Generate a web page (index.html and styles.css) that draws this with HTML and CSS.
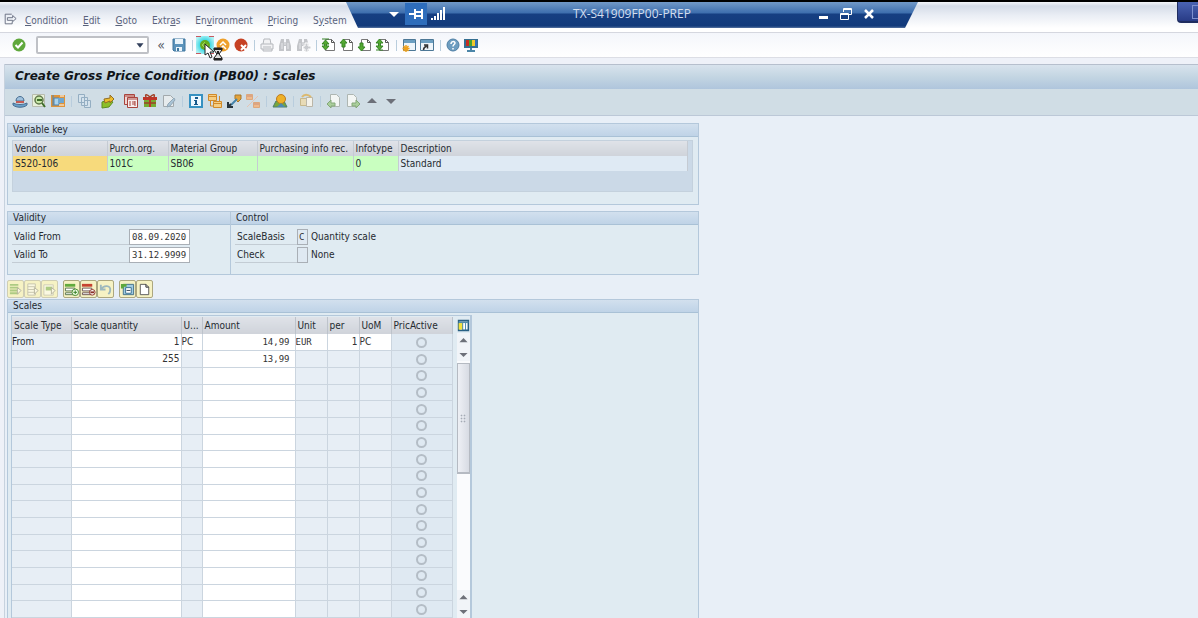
FILE: index.html
```html
<!DOCTYPE html>
<html lang="en">
  <head>
    <meta charset="UTF-8" />
    <meta name="viewport" content="width=device-width, initial-scale=1.0" />
    <title>Create Gross Price Condition (PB00) : Scales</title>
    <link rel="stylesheet" href="styles.css">
  </head>
  <body>
    <!-- shared icons -->
    <svg class="sprite" aria-hidden="true">
      <symbol id="page" viewBox="0 0 16 16"><path d="M4.500 2.500h6l3 3v8h-9z" fill="#fff" stroke="#777"/><path d="M10.500 2.500v3h3" fill="none" stroke="#555"/></symbol>
      <symbol id="binoculars" viewBox="0 0 16 16"><path d="M4 2h3v3h2V2h3l2 7v5H9v-5H7v5H2V9z" fill="#c3c5c9"/><path d="M5 6v6M11 6v6M8 5v3" stroke="#e6e7ea"/></symbol>
      <symbol id="up" viewBox="0 0 16 16"><path d="M8 5l5 5H3z" fill="#6d7079"/></symbol>
      <symbol id="down" viewBox="0 0 16 16"><path d="M3 6h10l-5 5z" fill="#6d7079"/></symbol>
    </svg>

    <header class="menubar">
      <svg class="menu-icon" viewBox="0 0 16 16"><path d="M10 2.500H2.500v11h8V11M5 6.500h6V4l4 3.500-4 3.500V9.500H5z" fill="none" stroke="#5f6679"/></svg>
      <nav class="menu">
        <a href="#"><u>C</u>ondition</a>
        <a href="#"><u>E</u>dit</a>
        <a href="#"><u>G</u>oto</a>
        <a href="#">Extr<u>a</u>s</a>
        <a href="#">En<u>v</u>ironment</a>
        <a href="#"><u>P</u>ricing</a>
        <a href="#">S<u>y</u>stem</a>
      </nav>
    </header>

    <!-- remote session bar floats over the menu -->
    <div class="session-bar">
      <div class="session-left">
        <button aria-label="Session menu"><svg viewBox="0 0 16 16"><path d="M3 6h10l-5 5z" fill="#fff"/></svg></button>
        <button class="pinned" aria-label="Pin"><svg viewBox="0 0 16 16"><path d="M1 7h5V3h2v2h5V3h2v10h-2v-2H8v2H6V9H1zM8 7v2h5V7z" fill="#fff"/></svg></button>
        <button aria-label="Connection quality"><svg viewBox="0 0 16 16"><path d="M1 12h2v2H1zM4 10h2v4H4zM7 7h2v7H7zM10 4h2v10h-2zM13 1h2v13h-2z" fill="#fff"/></svg></button>
      </div>
      <span class="session-name">TX-S41909FP00-PREP</span>
      <div class="session-right">
        <button aria-label="Minimize"><svg viewBox="0 0 16 16"><path d="M4 10h9v3H4z" fill="#fff"/></svg></button>
        <button aria-label="Restore"><svg viewBox="0 0 16 16"><path d="M5.500 6V2.500h8v6H11M5 3.500h9M2.500 7.500h8v6h-8zM2 8.500h9" fill="none" stroke="#fff"/></svg></button>
        <button aria-label="Close"><svg viewBox="0 0 16 16"><path d="M4 4l8 8M12 4l-8 8" stroke="#fff" stroke-width="2.500"/></svg></button>
      </div>
    </div>
    <div class="corner-bar"></div>

    <div class="toolbar">
      <button aria-label="Enter"><svg viewBox="0 0 16 16"><circle cx="8" cy="8" r="6.500" fill="#5fa83c"/><path d="M4.500 8l2.500 2.500 4.500-5" fill="none" stroke="#fff" stroke-width="2"/></svg></button>
      <div class="command">
        <input type="text" aria-label="Command field">
        <svg viewBox="0 0 16 16"><path d="M4 6h8l-4 5z" fill="#33415c"/></svg>
      </div>
      <button class="collapse" aria-label="Collapse">«</button>
      <button aria-label="Save"><svg viewBox="0 0 16 16"><path d="M2 2h12v12H3l-1-1z" fill="#5c93bb" stroke="#3e779f"/><path d="M4 2h8v5H4zM5 10h6v4H5z" fill="#eaf4fb"/><path d="M6 11h2v3H6z" fill="#3e779f"/></svg></button>
      <i class="sep"></i>
      <button class="busy" aria-label="Back">
        <svg viewBox="0 0 16 16"><circle cx="8" cy="8" r="5" fill="#66ad1e"/><path d="M5 8h6M8 5L5 8l3 3" fill="none" stroke="#9fd05c"/></svg>
        <svg class="pointer" viewBox="0 0 20 18"><path d="M1 1v11l3-2 2 5 2-1-2-5h4z" fill="#fff" stroke="#222"/><path d="M10 5h8v2l-3 4 3 4v2h-8v-2l3-4-3-4z" fill="#ddd" stroke="#111"/><path d="M10 5h8v2h-8zM10 15h8v2h-8zM13 8h2v3h-2z" fill="#222"/></svg>
      </button>
      <button aria-label="Exit"><svg viewBox="0 0 16 16"><circle cx="8" cy="8" r="6.500" fill="#eea02b"/><path d="M5 8l3-3 3 3M5 12l3-3 3 3" fill="none" stroke="#fff" stroke-width="1.500"/></svg></button>
      <button aria-label="Cancel"><svg viewBox="0 0 16 16"><circle cx="8" cy="8" r="6.500" fill="#c64124"/><path d="M8 8l5 5M13 8l-5 5" stroke="#fff" stroke-width="2"/></svg></button>
      <i class="sep"></i>
      <button aria-label="Print"><svg viewBox="0 0 16 16"><path d="M4 7l1-5h6l1 5M2 7h12v5H2zM4 12v2h9v-2" fill="#f2f2f4" stroke="#b5b8bd"/><path d="M4 10h8" stroke="#b5b8bd"/></svg></button>
      <button aria-label="Find"><svg><use href="#binoculars"/></svg></button>
      <button aria-label="Find next"><svg viewBox="0 0 16 16"><use href="#binoculars"/><path d="M10 6h3v3h3v3h-3v3h-3v-3H8V9h2z" fill="#c9cbcf" stroke="#fff"/></svg></button>
      <i class="sep"></i>
      <button aria-label="First page"><svg viewBox="0 0 16 16"><use href="#page"/><path d="M1 2h7M4.500 3L1 7h2.500v2H1l3.500 4L8 9H5.500V7H8z" fill="#54a832" stroke="#378526"/></svg></button>
      <button aria-label="Previous page"><svg viewBox="0 0 16 16"><use href="#page"/><path d="M4.500 2L1 6h2v4h3V6h2z" fill="#54a832" stroke="#378526"/></svg></button>
      <button aria-label="Next page"><svg viewBox="0 0 16 16"><use href="#page"/><path d="M4.500 14L1 10h2V6h3v4h2z" fill="#54a832" stroke="#378526"/></svg></button>
      <button aria-label="Last page"><svg viewBox="0 0 16 16"><use href="#page"/><path d="M4.500 2L1 6h2.500v3H1l3.500 4L8 9H5.500V6H8zM1 13h7" fill="#54a832" stroke="#378526"/></svg></button>
      <i class="sep"></i>
      <button aria-label="New session"><svg viewBox="0 0 16 16"><path d="M2.500 2.500h12v11h-12z" fill="#eef5fa" stroke="#4d7896"/><path d="M3 3h11v3H3z" fill="#6c9fc1"/><path d="M5 8v7M1.500 11.500h7M2.500 9l5 5M7.500 9l-5 5" stroke="#f0a21d" stroke-width="1.500"/></svg></button>
      <button aria-label="Create shortcut"><svg viewBox="0 0 16 16"><path d="M1.500 2.500h13v11h-13z" fill="#eef5fa" stroke="#4d7896"/><path d="M2 3h12v3H2z" fill="#6c9fc1"/><path d="M4.500 13c0-2 1-3 3-4M5 8h3.500v3.500" fill="none" stroke="#333" stroke-width="1.500"/></svg></button>
      <i class="sep"></i>
      <button aria-label="Help"><svg viewBox="0 0 16 16"><circle cx="8" cy="8" r="6" fill="#6d9dc0" stroke="#4e7fa5"/><path d="M6 7c0-3 4-3 4-1 0 1.500-2 1.500-2 3.500M8 11v1.500" fill="none" stroke="#fff" stroke-width="1.500"/></svg></button>
      <button aria-label="Customize layout"><svg viewBox="0 0 16 16"><path d="M1 2h14v9H1z" fill="#356f91"/><path d="M3 3h3v6H3z" fill="#c52e23"/><path d="M6 3h3v6H6z" fill="#46a232"/><path d="M9 3h3v6H9z" fill="#f2c72b"/><path d="M12 3h2v6h-2z" fill="#3471b9"/><path d="M7 11h2v2h3v2H4v-2h3z" fill="#4c86a8"/></svg></button>
    </div>

    <main class="screen">
      <h1>Create Gross Price Condition (PB00) : Scales</h1>

      <div class="app-toolbar">
        <button aria-label="Overview"><svg viewBox="0 0 16 16"><path d="M4 8c0-6 8-6 8 0z" fill="#9fc1dd" stroke="#476d91"/><path d="M1 10c3 2 11 2 14 0v2c-3 3-11 3-14 0z" fill="#68a0ca" stroke="#476d91"/><path d="M4 8h8v2H4z" fill="#c45a53"/></svg></button>
        <button aria-label="Details"><svg viewBox="0 0 16 16"><path d="M1.500 1.500h12v12h-12z" fill="#e8f1da" stroke="#b8bcae"/><circle cx="8" cy="7" r="4" fill="#c7e8a8" stroke="#61774b" stroke-width="1.500"/><path d="M6 7h5M11 10l3 4" stroke="#3f6e2b" stroke-width="2"/></svg></button>
        <button aria-label="Period"><svg viewBox="0 0 16 16"><path d="M1 2h14v12H1z" fill="#df943b"/><path d="M3 2v11M4 5h5v7H4z" fill="#acd3eb" stroke="#4b84b5"/><path d="M8 5h6v5H8z" fill="#6fa7d0"/><path d="M10 3h4M9 12h5" stroke="#fff"/></svg></button>
        <i class="sep"></i>
        <button aria-label="Copy"><svg viewBox="0 0 16 16"><path d="M1.500 1.500h6v8h-6zM4.500 4.500h6v8h-6zM7.500 7.500h6v7h-6z" fill="#d4e2ec" stroke="#94aec2"/></svg></button>
        <button class="wide" aria-label="Change"><svg viewBox="0 0 16 16"><path d="M2 9l6-2 5 2-4 5-7 1z" fill="#8cbf28" stroke="#5c8d21"/><path d="M4 6l6-1V2l4 4-4 4V8L5 10z" fill="#edbd2c" stroke="#936e25"/></svg></button>
        <button aria-label="Selected records"><svg viewBox="0 0 16 16"><path d="M1.500 1.500h10v10h-10z" fill="#f0d5d1" stroke="#a9443d"/><path d="M4.500 4.500h10v10h-10z" fill="#f7eeee" stroke="#a9443d"/><path d="M2 3h9M5 6h9M7 8v5M9 9h3M9 11h3M12 8v5" stroke="#a9443d"/></svg></button>
        <button aria-label="Free goods"><svg viewBox="0 0 16 16"><path d="M2 6h12v8H2z" fill="#78ab33"/><path d="M1 4h14v3H1zM7 4h2v10H7z" fill="#bf3428"/><path d="M8 4C4 0 3 2 4 4M8 4c4-4 5-2 4 0M2 10h12" fill="none" stroke="#9f4127" stroke-width="1.500"/></svg></button>
        <button aria-label="Texts"><svg viewBox="0 0 16 16"><path d="M2.500 2.500h7l3 3v8h-10z" fill="#e6ebed" stroke="#a2a9ac"/><path d="M13 5l-6 6-1 3 3-1 5-6z" fill="#a9c4d6" stroke="#92a7b6"/></svg></button>
        <i class="sep"></i>
        <button aria-label="Information"><svg viewBox="0 0 16 16"><path d="M2 2h12v12H2z" fill="#edf8ff" stroke="#3791c1" stroke-width="2"/><path d="M7 4h3v2H7zM6 7h3v4h1v1H6v-1h1V8H6z" fill="#17598b"/></svg></button>
        <button aria-label="Condition records"><svg viewBox="0 0 16 16"><path d="M1.500 1.500h8v6h-8zM6.500 8.500h8v6h-8z" fill="#f5ce83" stroke="#d18a2a"/><path d="M2 3.500h7M7 10.500h7M12.500 3v5M3.500 8v5H6" fill="none" stroke="#d18a2a"/></svg></button>
        <button aria-label="Limits"><svg viewBox="0 0 16 16"><path d="M9 2h6v4l-3 3-3-3z" fill="#e2a33b" stroke="#a9772b"/><path d="M11 6l-6 6" stroke="#4584aa" stroke-width="2"/><path d="M2 9v5h5M2 14l3-3" fill="none" stroke="#27343d" stroke-width="2"/></svg></button>
        <button aria-label="Exclusions"><svg viewBox="0 0 16 16"><path d="M1.500 1.500h6v5h-6zM8.500 9.500h6v5h-6z" fill="#efba8c" stroke="#dca77d"/><path d="M2 14L13 3" stroke="#e4c4b4"/><path d="M9 11h5M2 3h5" stroke="#c98f7c"/></svg></button>
        <i class="sep"></i>
        <button aria-label="Partner"><svg viewBox="0 0 16 16"><path d="M1 14l3-6h8l3 6z" fill="#78a63b" stroke="#4a7d6d"/><circle cx="9" cy="6" r="4.500" fill="#eeb127" stroke="#bd7a20"/><path d="M5 14l4-4 4 4z" fill="#4c89b2"/></svg></button>
        <i class="sep"></i>
        <button aria-label="Paste"><svg viewBox="0 0 16 16"><path d="M1.500 5.500h8v7h-8z" fill="#e8dbb6" stroke="#c7b88c"/><path d="M7.500 4.500h6v9h-6z" fill="#f4f2ea" stroke="#bbb6a8"/><path d="M3 4c2-3 6-3 9 0" fill="none" stroke="#dcb96f" stroke-width="2"/></svg></button>
        <i class="sep"></i>
        <button aria-label="Previous record"><svg viewBox="0 0 16 16"><path d="M4.500 1.500h6l3 3v9h-9z" fill="#f3f6f4" stroke="#aeb6b2"/><path d="M1 11l4-4v3h4v3H5v2z" fill="#a9ce9b" stroke="#84a778"/></svg></button>
        <button aria-label="Next record"><svg viewBox="0 0 16 16"><path d="M2.500 1.500h6l3 3v9h-9z" fill="#f3f6f4" stroke="#aeb6b2"/><path d="M15 11l-4-4v3H7v3h4v2z" fill="#a9ce9b" stroke="#84a778"/></svg></button>
        <button aria-label="Up"><svg><use href="#up"/></svg></button>
        <button aria-label="Down"><svg><use href="#down"/></svg></button>
      </div>

      <div class="content">
        <section class="panel key-panel">
          <h2>Variable key</h2>
          <div class="key-box">
            <table class="key-table">
              <thead>
                <tr>
                  <th class="w-vendor">Vendor</th>
                  <th class="w-org">Purch.org.</th>
                  <th class="w-group">Material Group</th>
                  <th class="w-info">Purchasing info rec.</th>
                  <th class="w-type">Infotype</th>
                  <th>Description</th>
                </tr>
              </thead>
              <tbody>
                <tr>
                  <td class="selected">S520-106</td>
                  <td class="key">101C</td>
                  <td class="key">SB06</td>
                  <td class="key"></td>
                  <td class="key">0</td>
                  <td>Standard</td>
                </tr>
              </tbody>
            </table>
          </div>
        </section>

        <div class="panel-row">
          <section class="panel validity">
            <h2>Validity</h2>
            <div class="field">
              <label for="validFrom">Valid From</label>
              <input id="validFrom" type="text" value="08.09.2020">
            </div>
            <div class="field">
              <label for="validTo">Valid To</label>
              <input id="validTo" type="text" value="31.12.9999">
            </div>
          </section>
          <section class="panel control">
            <h2>Control</h2>
            <div class="field">
              <label for="scaleBasis">ScaleBasis</label>
              <input id="scaleBasis" type="text" value="C" readonly>
              <span>Quantity scale</span>
            </div>
            <div class="field">
              <label for="check">Check</label>
              <input id="check" type="text" value="" readonly>
              <span>None</span>
            </div>
          </section>
        </div>

        <div class="scale-tools">
          <div class="tool-group faded">
            <button aria-label="Select all"><svg viewBox="0 0 16 16"><path d="M2 3h9M2 6h9M2 9h9M2 12h9" stroke="#67a544" stroke-width="2"/><path d="M10 6l4 3-4 4z" fill="#fff" stroke="#777"/></svg></button>
            <button aria-label="Select block"><svg viewBox="0 0 16 16"><path d="M3 2h8v12H3zM3 5h8M3 8h8M3 11h8" fill="#fff" stroke="#999"/><path d="M10 6l4 3-4 4z" fill="#fff" stroke="#777"/></svg></button>
            <button aria-label="Deselect all"><svg viewBox="0 0 16 16"><path d="M2 3h10v11H2z" fill="#fff" stroke="#aaa"/><path d="M4 5h7v4H4z" fill="#67a544"/><path d="M10 6l4 3-4 4z" fill="#fff" stroke="#777"/></svg></button>
          </div>
          <div class="tool-group">
            <button aria-label="Insert row"><svg viewBox="0 0 16 16"><path d="M1 2h11v3H1z" fill="#62aa3d"/><path d="M1.500 6.500h10v3h-10zM1.500 11.500h10v2h-10z" fill="#fff" stroke="#55724a"/><circle cx="12" cy="11" r="3.500" fill="#f1ffe7" stroke="#468a2f"/><path d="M12 9v4M10 11h4" stroke="#317a21"/></svg></button>
            <button aria-label="Delete row"><svg viewBox="0 0 16 16"><path d="M1 2h11v3H1z" fill="#c64330"/><path d="M1.500 6.500h10v3h-10zM1.500 11.500h10v2h-10z" fill="#fff" stroke="#6a5250"/><circle cx="12" cy="11" r="3" fill="#fff" stroke="#8b3027"/><path d="M10 11h4" stroke="#8b3027" stroke-width="2"/></svg></button>
            <button aria-label="Undo"><svg viewBox="0 0 16 16"><path d="M3 3v5h5M3 8c3-5 11-5 10 1 0 2-1 3-2 4" fill="none" stroke="#9db8bd" stroke-width="2"/></svg></button>
          </div>
          <div class="tool-group">
            <button aria-label="Display scales"><svg viewBox="0 0 16 16"><path d="M3.500 2.500h11v11h-11z" fill="#9fcae2" stroke="#416f87"/><path d="M6 6h6v6H6z" fill="#fff" stroke="#36718f"/><path d="M7 9h4" stroke="#345"/><path d="M1 2h6v3H4v2H1z" fill="#5ea83c"/></svg></button>
            <button aria-label="New scale"><svg viewBox="0 0 16 16"><path d="M3.500 2.500h6l3 3v8h-9z" fill="#fff" stroke="#555"/><path d="M9.500 2.500v3h3" fill="none" stroke="#222"/></svg></button>
          </div>
        </div>

        <section class="panel scales">
          <h2>Scales</h2>
          <div class="scale-box">
            <table class="scale-table">
              <thead>
                <tr>
                  <th class="c-type">Scale Type</th>
                  <th class="c-qty">Scale quantity</th>
                  <th class="c-unit">U...</th>
                  <th class="c-amount">Amount</th>
                  <th class="c-small">Unit</th>
                  <th class="c-small">per</th>
                  <th class="c-small">UoM</th>
                  <th class="c-active">PricActive</th>
                </tr>
              </thead>
              <tbody id="scaleRows"></tbody>
            </table>
            <div class="scroll">
              <button aria-label="Configure columns"><svg viewBox="0 0 16 16"><path d="M2 2h12v12H2z" fill="#fff" stroke="#285f82" stroke-width="2"/><path d="M2 5h5v8H2z" fill="#f4e23d"/><path d="M2 3h12v2H2z" fill="#548da8"/><path d="M7 5v9M10.500 5v9" stroke="#26729c"/></svg></button>
              <button aria-label="Scroll up"><svg><use href="#up"/></svg></button>
              <button aria-label="Scroll down"><svg><use href="#down"/></svg></button>
              <div class="track"><div class="thumb"></div></div>
              <button aria-label="Page up"><svg><use href="#up"/></svg></button>
              <button aria-label="Page down"><svg><use href="#down"/></svg></button>
            </div>
          </div>
        </section>
      </div>
    </main>
    <script src="script.js"></script>
  </body>
</html>
```
FILE: styles.css
```css
* {
  margin: 0;
  padding: 0;
  box-sizing: border-box;
}

body {
  display: flex;
  flex-direction: column;
  height: 100vh;
  overflow: hidden;
  border-top: 2px solid #000;
  background: #eef1f8;
  color: #252a30;
  font-family: "DejaVu Sans Condensed", "DejaVu Sans", sans-serif;
  font-size: 10px;
  line-height: 14px;
}

button {
  display: flex;
  align-items: center;
  justify-content: center;
  border: none;
  background: none;
  color: inherit;
  font: inherit;
}

button svg {
  flex: none;
  width: 16px;
  height: 16px;
}

.sprite {
  position: absolute;
  width: 0;
  height: 0;
}

.menubar {
  display: flex;
  align-items: center;
  flex: none;
  height: 30px;
  padding: 7px 0 0 3px;
  background: linear-gradient(#f5f7fb 0, #d5dce8 4px, #e9edf4 13px, #fff 26px);
}

.menu-icon {
  width: 14px;
  height: 14px;
  margin: 0 8px 4px 0;
}

.menu {
  display: flex;
  gap: 15px;
}

.menu a {
  color: #59627b;
  text-decoration: none;
}

/* remote session */
.session-bar {
  position: absolute;
  top: 2px;
  left: 346px;
  display: flex;
  align-items: center;
  justify-content: space-between;
  width: 572px;
  height: 26px;
  padding: 0 41px 2px 37px;
  background: linear-gradient(#7199c8, #3d6ead 11px, #163f82 12px, #123a7b 24px, #5875a1);
  clip-path: polygon(0 0, 100% 0, 559px 100%, 12px 100%);
  color: #d3deef;
}

.session-left,
.session-right {
  display: flex;
}

.session-left button {
  width: 22px;
  height: 22px;
}

.session-left .pinned {
  background: #2e6dbb;
}

.session-right {
  gap: 7px;
}

.session-name {
  font: 12px/16px "Open Sans", sans-serif;
}

.corner-bar {
  position: absolute;
  top: 2px;
  right: 0;
  width: 21px;
  height: 21px;
  border: 1px solid #1f2d60;
  border-width: 0 0 2px 1px;
  border-radius: 0 0 0 4px;
  background: linear-gradient(#4a63b3, #283b86);
}

.corner-bar::after {
  content: "";
  display: block;
  height: 12px;
  margin: 3px 0 0 14px;
  border: 1px solid #7c8fce;
  border-right: none;
}

/* system toolbar */
.toolbar {
  display: flex;
  align-items: center;
  flex: none;
  height: 26px;
  padding-left: 10px;
  border-top: 1px solid #d5d7df;
  border-bottom: 1px solid #dcdee5;
  background: linear-gradient(#f4f6fb, #fff);
}

.toolbar button {
  flex: none;
  width: 18px;
  height: 18px;
}

.command {
  display: flex;
  align-items: center;
  width: 113px;
  height: 18px;
  margin: 0 3px 0 8px;
  border: 2px solid #bfc1c6;
  border-radius: 2px;
  background: #fff;
}

.command input {
  flex: 1;
  min-width: 0;
  border: none;
  background: none;
}

.command svg {
  width: 14px;
  height: 14px;
}

.toolbar .collapse {
  font-size: 14px;
  color: #555b68;
}

.sep {
  flex: none;
  width: 8px;
  height: 11px;
  background: linear-gradient(#b9cddd, #b9cddd) center / 1px 100% no-repeat;
}

.busy {
  position: relative;
  background:
    linear-gradient(90deg, #c75961 5px, transparent 5px 13px, #c75961 13px) top / 100% 1px no-repeat,
    linear-gradient(90deg, #c75961 5px, transparent 5px 13px, #c75961 13px) bottom / 100% 1px no-repeat,
    radial-gradient(#42d9e5 40%, #b1f2f4 80%);
}

.busy .pointer {
  position: absolute;
  top: 7px;
  left: 8px;
  z-index: 1;
  width: 20px;
  height: 18px;
}

/* screen */
.screen {
  display: flex;
  flex: 1;
  flex-direction: column;
  min-height: 0;
  margin: 6px 0 0 4px;
  border-left: 1px solid #c7d2de;
  background: #e8eff7;
}

h1 {
  flex: none;
  height: 25px;
  padding-left: 10px;
  border-top: 1px solid #b6bfcd;
  background: linear-gradient(#d8e3ed, #c3d5e2 12px, #afc5dc);
  color: #101418;
  font-family: "DejaVu Sans", sans-serif;
  font-size: 12px;
  font-style: italic;
  line-height: 22px;
}

.app-toolbar {
  display: flex;
  align-items: center;
  flex: none;
  height: 27px;
  padding: 0 0 2px 5px;
  border-bottom: 1px solid #bcc8d7;
  background: #d0dde5;
}

.app-toolbar button {
  width: 19px;
  height: 19px;
}

.app-toolbar .wide {
  margin: 0 4px;
}

.content {
  display: flex;
  flex: 1;
  flex-direction: column;
  width: 100%;
  max-width: 694px;
  min-height: 0;
  padding: 7px 0 0 2px;
}

.panel {
  border: 1px solid #b4c8db;
  background: #e0ebf2;
}

.panel h2 {
  height: 13px;
  padding-left: 5px;
  border-bottom: 1px solid #a9c1d6;
  background: linear-gradient(#d2e0ee, #bfd3e7);
  font-size: 10px;
  font-weight: normal;
  line-height: 12px;
}

table {
  border-collapse: collapse;
  table-layout: fixed;
}

th {
  background: linear-gradient(#dfe2e8, #cfd3da);
  font-weight: normal;
  text-align: left;
  white-space: nowrap;
}

.key-box {
  height: 52px;
  margin: 3px 5px 12px 4px;
  padding-right: 4px;
  border: 1px solid #c4d1dd;
  background: #cbd9e7;
}

.key-table {
  width: 100%;
}

.key-table th,
.key-table td {
  height: 15px;
  padding-left: 2px;
  border-right: 1px solid #c5cbd3;
  line-height: 14px;
}

.key-table td {
  background: #dfeaf4;
}

.key-table td.key {
  background: #c9ffc0;
}

.key-table td.selected {
  background: #f7da7c;
}

.w-vendor { width: 94px; }
.w-org { width: 61px; }
.w-group { width: 89px; }
.w-info { width: 96px; }
.w-type { width: 45px; }

.panel-row {
  display: flex;
  flex: none;
  height: 64px;
  margin-top: 6px;
}

.validity {
  width: 223px;
  border-right: none;
}

.control {
  flex: 1;
}

.panel-row h2 {
  margin-bottom: 4px;
}

.field {
  display: flex;
  align-items: stretch;
  height: 16px;
  margin: 0 0 2px 4px;
  line-height: 16px;
}

.field label {
  width: 117px;
  padding-left: 2px;
  border-bottom: 1px solid #c3ccd4;
}

.control .field label {
  width: 62px;
}

.field input {
  width: 61px;
  padding: 0 2px;
  border: 1px solid #a9afb6;
  background: #fff;
  color: #333;
  font: 9px/12px "DejaVu Sans Mono", monospace;
}

.control .field input {
  width: 11px;
  padding: 0 1px;
  background: #dfe9f2;
}

.field span {
  padding-left: 3px;
}

.scale-tools {
  display: flex;
  flex: none;
  gap: 5px;
  margin: 5px 0 1px;
}

.tool-group {
  display: flex;
}

.tool-group button {
  width: 17px;
  height: 18px;
  border: 1px solid #aca780;
  border-radius: 2px;
  background: #f6f2c4;
}

.tool-group svg {
  width: 15px;
  height: 15px;
}

.tool-group.faded button {
  border-color: #cfcdb4;
}

.faded svg {
  opacity: 0.5;
}

/* scales */
.scales {
  display: flex;
  flex: 1;
  flex-direction: column;
  min-height: 0;
  border-bottom: none;
}

.scales h2 {
  flex: none;
}

.scale-box {
  display: flex;
  flex: 1;
  align-self: flex-start;
  gap: 4px;
  min-height: 0;
  margin: 2px 0 0 3px;
  border: 1px solid #b4c8db;
  border-width: 1px 2px 0 1px;
  padding-top: 1px;
}

.scale-table {
  width: 440px;
  height: 100%;
}

.scale-table th {
  height: 17px;
  padding-left: 2px;
  border-right: 1px solid #bdc3cb;
}

.scale-table td {
  height: 16px;
  border-right: 1px solid #cbd5df;
  border-bottom: 1px solid #cbd5df;
  background: #e7eef5;
  line-height: 12px;
}

.scale-table td.open {
  background: #fff;
}

.scale-table td.active {
  background: #dfe9f2;
}

.scale-table input[type="text"] {
  display: block;
  width: 100%;
  height: 12px;
  border: none;
  background: none;
  color: #333;
  font: 10px/12px "DejaVu Sans Condensed", "DejaVu Sans", sans-serif;
}

.scale-table input.num {
  padding-right: 1px;
  text-align: right;
}

.scale-table input.amount {
  padding-right: 5px;
}

.scale-table input.mono {
  font: 9px/12px "DejaVu Sans Mono", monospace;
}

.scale-table input[type="radio"] {
  display: block;
  width: 11px;
  height: 11px;
  margin: 0 auto;
  border: 2px solid #b4bdc6;
  border-radius: 50%;
  appearance: none;
}

.c-type { width: 59px; }
.c-qty { width: 110px; }
.c-unit { width: 21px; }
.c-amount { width: 93px; }
.c-small { width: 32px; }
.c-active { width: 61px; }

.scroll {
  display: flex;
  flex-direction: column;
  width: 13px;
}

.scroll button {
  flex: none;
  width: 13px;
  height: 14px;
  background: #f1f4f8;
}

.scroll button:first-child {
  height: 16px;
  background: none;
}

.scroll button svg {
  width: 13px;
  height: 13px;
}

.track {
  flex: 1;
  padding-top: 2px;
  background: #fafbfd;
}

.thumb {
  display: grid;
  place-items: center;
  height: 49%;
  border: 1px solid #b5bac2;
  border-bottom-width: 2px;
  background: linear-gradient(90deg, #eef0f5, #d7dbe3);
}

.thumb::after {
  content: "";
  width: 6px;
  height: 9px;
  background: radial-gradient(#a5abb5 40%, transparent 50%) 0 0 / 3px 3px;
}
```
FILE: script.js
```js
const rowCount = 17;
const columns = [
  { name: "qty", label: "Scale quantity", css: "num" },
  { name: "qtyUnit", label: "Scale unit", css: "" },
  { name: "amount", label: "Amount", css: "num amount mono" },
  { name: "currency", label: "Unit", css: "mono" },
  { name: "per", label: "per", css: "num" },
  { name: "uom", label: "UoM", css: "" },
];
const scales = [
  { type: "From", qty: "1", qtyUnit: "PC", amount: "14,99", currency: "EUR", per: "1", uom: "PC" },
  { qty: "255", amount: "13,99" },
];

const tbody = document.getElementById("scaleRows");

for (let i = 0; i < rowCount; i++) {
  const scale = scales[i] || {};
  const tr = document.createElement("tr");
  tr.insertCell().textContent = scale.type || "";

  columns.forEach((column) => {
    const td = tr.insertCell();
    // the units can only be changed on the first line
    if (i > 0 && column.name !== "qty" && column.name !== "amount") return;
    td.className = "open";
    const input = document.createElement("input");
    input.type = "text";
    input.className = column.css;
    input.value = scale[column.name] || "";
    input.setAttribute("aria-label", column.label + " " + (i + 1));
    td.appendChild(input);
  });

  const active = tr.insertCell();
  active.className = "active";
  const radio = document.createElement("input");
  radio.type = "radio";
  radio.name = "pricActive";
  radio.setAttribute("aria-label", "PricActive " + (i + 1));
  active.appendChild(radio);
  tbody.appendChild(tr);
}
```
